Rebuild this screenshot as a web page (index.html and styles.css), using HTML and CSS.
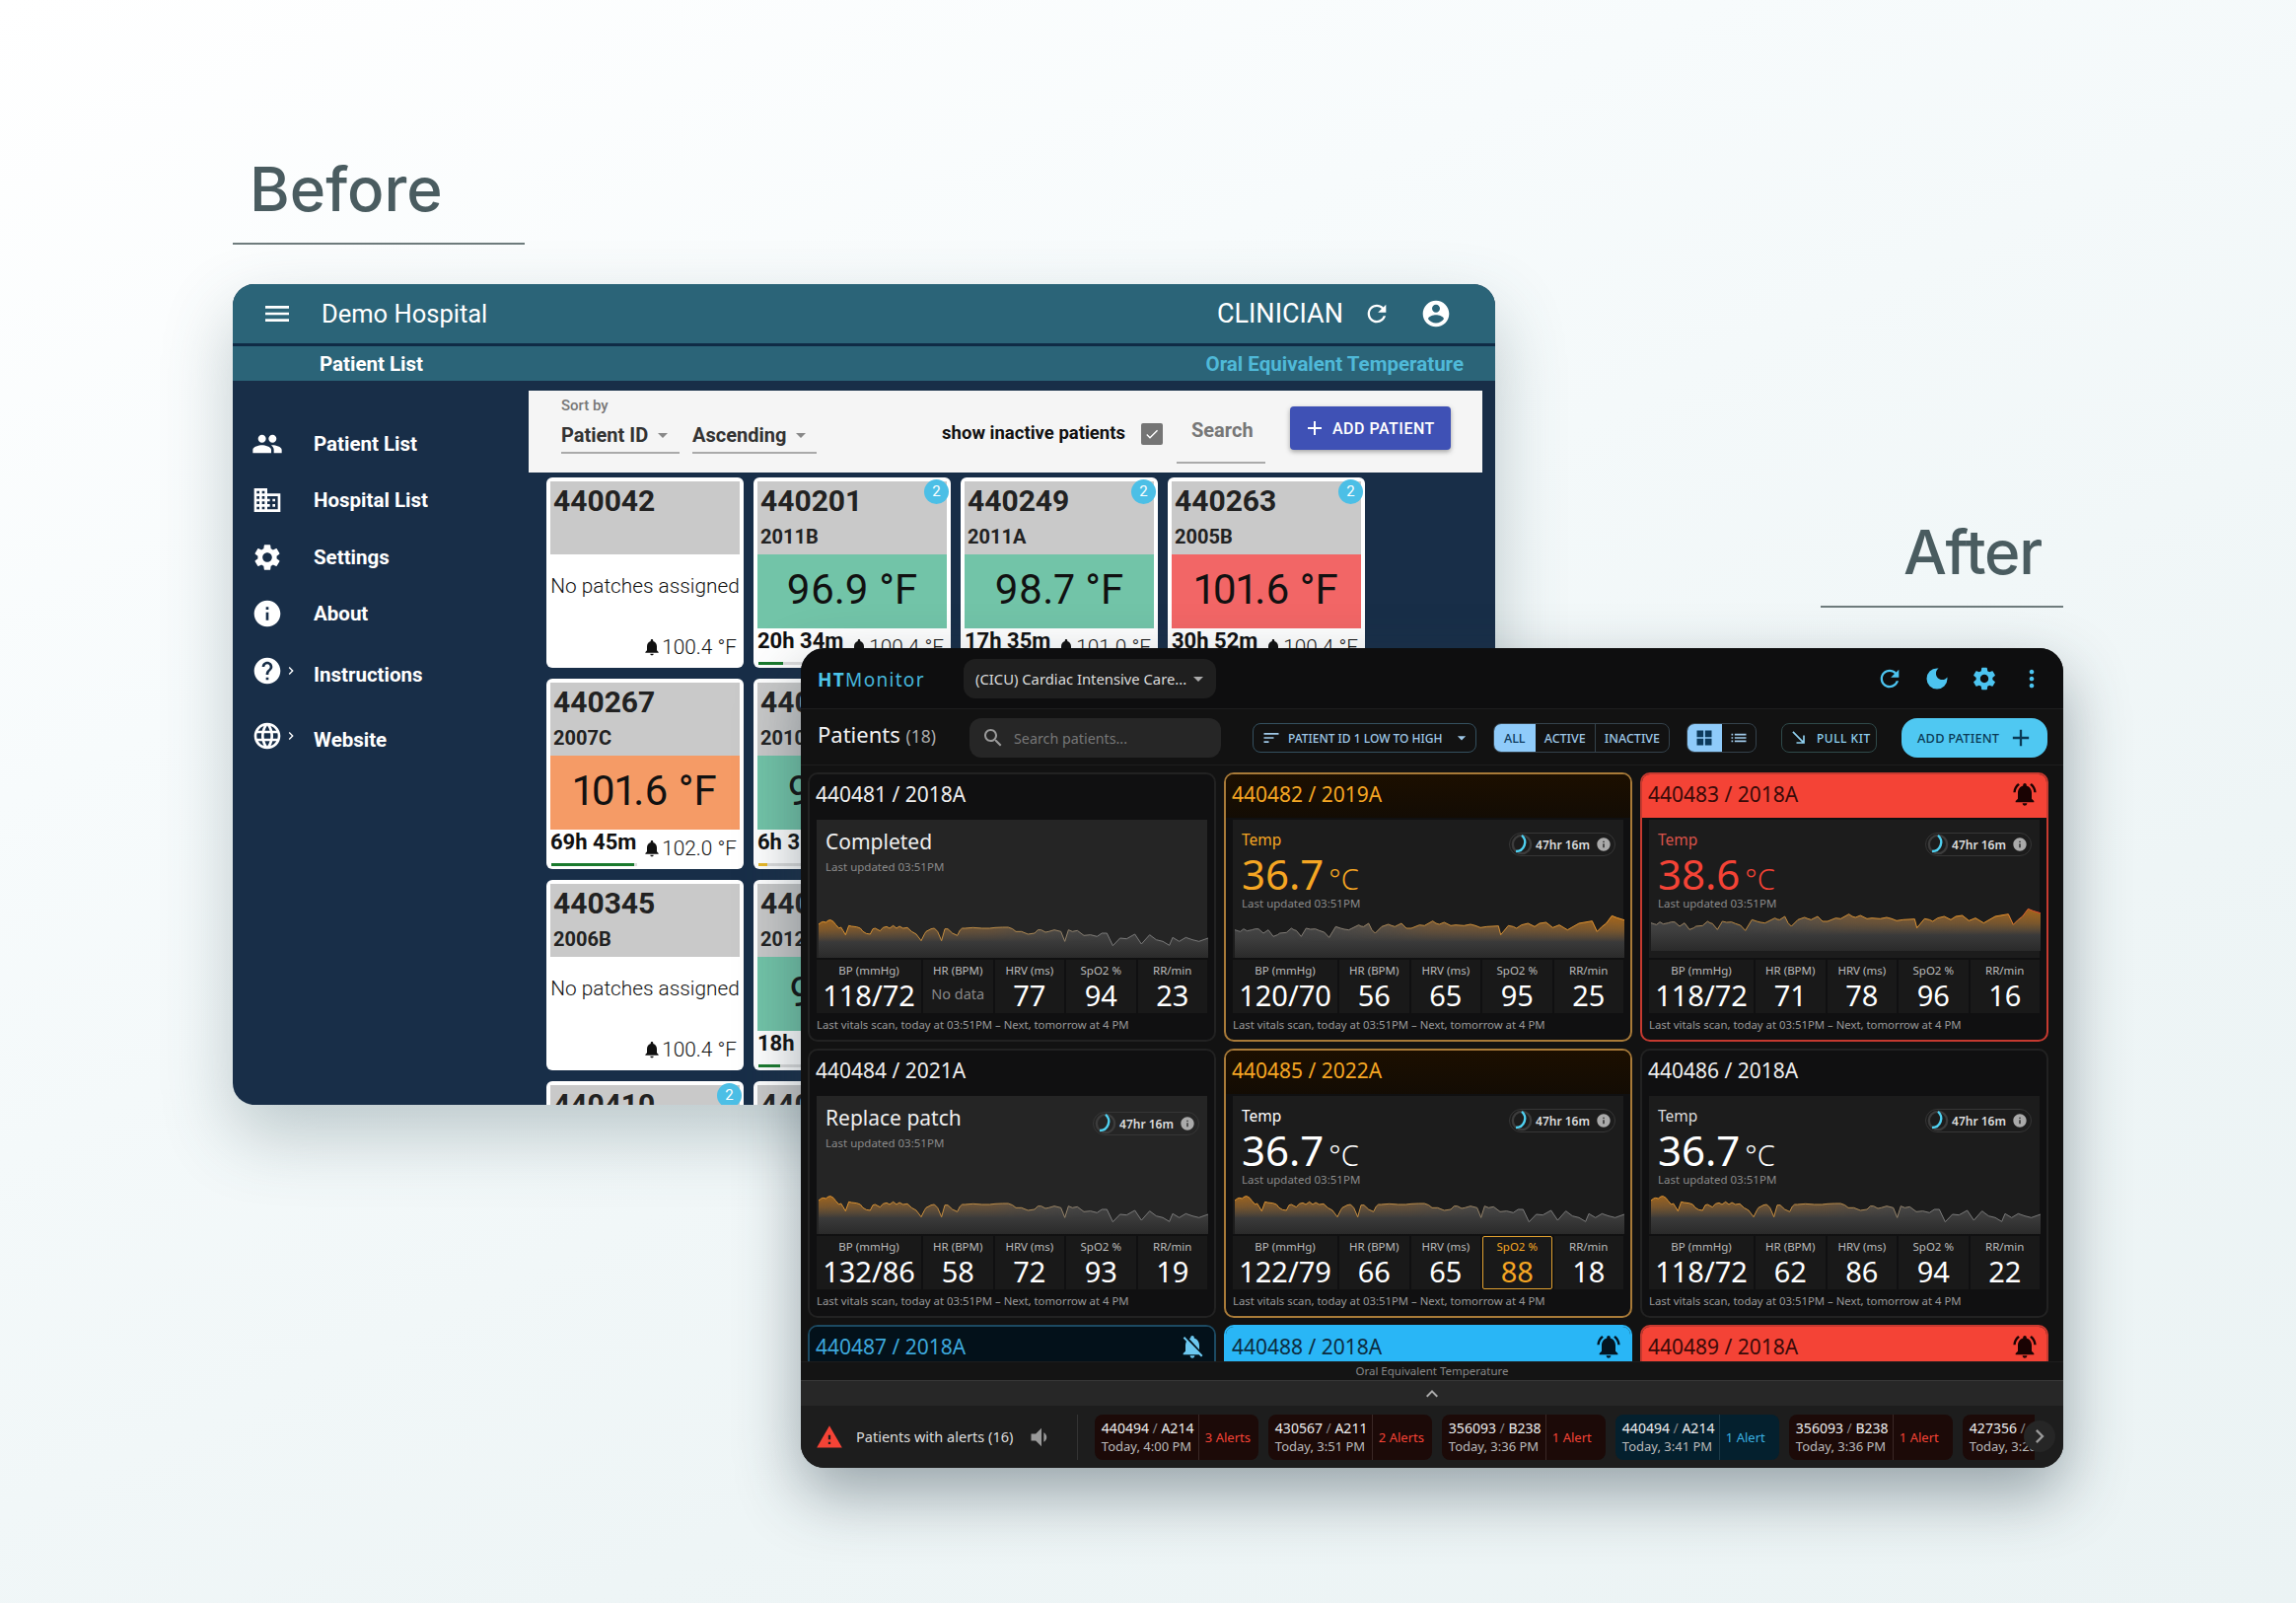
FILE: index.html
```html
<!DOCTYPE html>
<html lang="en">
<head>
    <meta charset="UTF-8">
    <title>Before and After - HTMonitor</title>
    <link rel="stylesheet" href="styles.css">
</head>
<body>

    <!-- icon sprite and chart waves -->
    <svg class="sprite" width="0" height="0">
        <defs>
            <symbol id="i-menu" viewBox="0 0 24 24"><path d="M3 18h18v-2H3v2zm0-5h18v-2H3v2zm0-7v2h18V6H3z"/></symbol>
            <symbol id="i-people" viewBox="0 0 24 24"><path d="M16 11c1.66 0 2.99-1.34 2.99-3S17.66 5 16 5c-1.66 0-3 1.34-3 3s1.34 3 3 3zm-8 0c1.66 0 2.99-1.34 2.99-3S9.66 5 8 5C6.34 5 5 6.34 5 8s1.34 3 3 3zm0 2c-2.33 0-7 1.17-7 3.5V19h14v-2.5c0-2.33-4.67-3.5-7-3.5zm8 0c-.29 0-.62.02-.97.05 1.16.84 1.97 1.97 1.97 3.45V19h6v-2.5c0-2.33-4.67-3.5-7-3.5z"/></symbol>
            <symbol id="i-business" viewBox="0 0 24 24"><path d="M12 7V3H2v18h20V7H12zM6 19H4v-2h2v2zm0-4H4v-2h2v2zm0-4H4V9h2v2zm0-4H4V5h2v2zm4 12H8v-2h2v2zm0-4H8v-2h2v2zm0-4H8V9h2v2zm0-4H8V5h2v2zm10 12h-8v-2h2v-2h-2v-2h2v-2h-2V9h8v10zm-2-8h-2v2h2v-2zm0 4h-2v2h2v-2z"/></symbol>
            <symbol id="i-gear" viewBox="0 0 24 24"><path d="M19.14 12.94c.04-.3.06-.61.06-.94 0-.32-.02-.64-.07-.94l2.03-1.58c.18-.14.23-.41.12-.61l-1.92-3.32c-.12-.22-.37-.29-.59-.22l-2.39.96c-.5-.38-1.03-.7-1.62-.94l-.36-2.54c-.04-.24-.24-.41-.48-.41h-3.84c-.24 0-.43.17-.47.41l-.36 2.54c-.59.24-1.13.57-1.62.94l-2.39-.96c-.22-.08-.47 0-.59.22L2.74 8.87c-.12.21-.08.47.12.61l2.03 1.58c-.05.3-.09.63-.09.94s.02.64.07.94l-2.03 1.58c-.18.14-.23.41-.12.61l1.92 3.32c.12.22.37.29.59.22l2.39-.96c.5.38 1.03.7 1.62.94l.36 2.54c.05.24.24.41.48.41h3.84c.24 0 .44-.17.47-.41l.36-2.54c.59-.24 1.13-.56 1.62-.94l2.39.96c.22.08.47 0 .59-.22l1.92-3.32c.12-.22.07-.47-.12-.61l-2.01-1.58zM12 15.6c-1.98 0-3.6-1.62-3.6-3.6s1.62-3.6 3.6-3.6 3.6 1.62 3.6 3.6-1.62 3.6-3.6 3.6z"/></symbol>
            <symbol id="i-info" viewBox="0 0 24 24"><path d="M12 2C6.48 2 2 6.48 2 12s4.48 10 10 10 10-4.48 10-10S17.52 2 12 2zm1 15h-2v-6h2v6zm0-8h-2V7h2v2z"/></symbol>
            <symbol id="i-help" viewBox="0 0 24 24"><path d="M12 2C6.48 2 2 6.48 2 12s4.48 10 10 10 10-4.48 10-10S17.52 2 12 2zm1 17h-2v-2h2v2zm2.07-7.75l-.9.92C13.45 12.9 13 13.5 13 15h-2v-.5c0-1.1.45-2.1 1.17-2.83l1.24-1.26c.37-.36.59-.86.59-1.41 0-1.1-.9-2-2-2s-2 .9-2 2H8c0-2.21 1.79-4 4-4s4 1.79 4 4c0 .88-.36 1.68-.93 2.25z"/></symbol>
            <symbol id="i-globe" viewBox="0 0 24 24"><path d="M11.99 2C6.47 2 2 6.48 2 12s4.47 10 9.99 10C17.52 22 22 17.52 22 12S17.52 2 11.99 2zm6.93 6h-2.95c-.32-1.25-.78-2.45-1.38-3.56 1.84.63 3.37 1.91 4.33 3.56zM12 4.04c.83 1.2 1.48 2.53 1.91 3.96h-3.82c.43-1.43 1.08-2.76 1.91-3.96zM4.26 14C4.1 13.36 4 12.69 4 12s.1-1.36.26-2h3.38c-.08.66-.14 1.32-.14 2 0 .68.06 1.34.14 2H4.26zm.82 2h2.95c.32 1.25.78 2.45 1.38 3.56-1.84-.63-3.37-1.9-4.33-3.56zm2.95-8H5.08c.96-1.66 2.49-2.93 4.33-3.56C8.81 5.55 8.35 6.75 8.03 8zM12 19.96c-.83-1.2-1.48-2.53-1.91-3.96h3.82c-.43 1.43-1.08 2.76-1.91 3.96zM14.34 14H9.66c-.09-.66-.16-1.32-.16-2 0-.68.07-1.35.16-2h4.68c.09.65.16 1.32.16 2 0 .68-.07 1.34-.16 2zm.25 5.56c.6-1.11 1.06-2.31 1.38-3.56h2.95c-.96 1.65-2.49 2.93-4.33 3.56zM16.36 14c.08-.66.14-1.32.14-2 0-.68-.06-1.34-.14-2h3.38c.16.64.26 1.31.26 2s-.1 1.36-.26 2h-3.38z"/></symbol>
            <symbol id="i-account" viewBox="0 0 24 24"><path d="M12 2C6.48 2 2 6.48 2 12s4.48 10 10 10 10-4.48 10-10S17.52 2 12 2zm0 3c1.66 0 3 1.34 3 3s-1.34 3-3 3-3-1.34-3-3 1.34-3 3-3zm0 14.2c-2.5 0-4.71-1.28-6-3.22.03-1.99 4-3.08 6-3.08 1.99 0 5.97 1.09 6 3.08-1.29 1.94-3.5 3.22-6 3.22z"/></symbol>
            <symbol id="i-refresh" viewBox="0 0 24 24"><path d="M17.65 6.35C16.2 4.9 14.21 4 12 4c-4.42 0-7.99 3.58-7.99 8s3.57 8 7.99 8c3.73 0 6.84-2.55 7.73-6h-2.08c-.82 2.33-3.04 4-5.65 4-3.31 0-6-2.69-6-6s2.69-6 6-6c1.66 0 3.14.69 4.22 1.78L13 11h7V4l-2.35 2.35z"/></symbol>
            <symbol id="i-bell" viewBox="0 0 24 24"><path d="M12 22c1.1 0 2-.9 2-2h-4c0 1.1.89 2 2 2zm6-6v-5c0-3.07-1.64-5.64-4.5-6.32V4c0-.83-.67-1.5-1.5-1.5s-1.5.67-1.5 1.5v.68C7.63 5.36 6 7.92 6 11v5l-2 2v1h16v-1l-2-2z"/></symbol>
            <symbol id="i-bell-ring" viewBox="0 0 24 24"><path d="M7.58 4.08L6.15 2.65C3.75 4.48 2.17 7.3 2.03 10.5h2c.15-2.65 1.51-4.97 3.55-6.42zm12.39 6.42h2c-.15-3.2-1.73-6.02-4.12-7.85l-1.42 1.43c2.02 1.45 3.39 3.77 3.54 6.42zM18 11c0-3.07-1.64-5.64-4.5-6.32V4c0-.83-.67-1.5-1.5-1.5s-1.5.67-1.5 1.5v.68C7.63 5.36 6 7.92 6 11v5l-2 2v1h16v-1l-2-2v-5zm-6 11c.14 0 .27-.01.4-.04.65-.14 1.18-.58 1.44-1.18.1-.24.15-.5.15-.78h-4c.01 1.1.9 2 2.01 2z"/></symbol>
            <symbol id="i-bell-off" viewBox="0 0 24 24"><path d="M20 18.69L7.84 6.14 5.27 3.49 4 4.76l2.8 2.8v.01c-.52.99-.8 2.16-.8 3.42v5l-2 2v1h13.73l2 2L21 19.72l-1-1.03zM12 22c1.11 0 2-.89 2-2h-4c0 1.11.89 2 2 2zm6-7.32V11c0-3.08-1.64-5.64-4.5-6.32V4c0-.83-.67-1.5-1.5-1.5s-1.5.67-1.5 1.5v.68c-.15.03-.29.08-.42.12-.1.03-.2.07-.3.11h-.01c-.2.08-.4.17-.59.27-.01 0-.01 0-.02.01L18 14.68z"/></symbol>
            <symbol id="i-moon" viewBox="0 0 24 24"><path d="M12 3a9 9 0 1 0 9 9c0-.46-.04-.92-.1-1.36-.98 1.37-2.58 2.26-4.4 2.26-3 0-5.4-2.4-5.4-5.4 0-1.81.89-3.42 2.26-4.4-.44-.06-.9-.1-1.36-.1z"/></symbol>
            <symbol id="i-dots" viewBox="0 0 24 24"><path d="M12 8c1.1 0 2-.9 2-2s-.9-2-2-2-2 .9-2 2 .9 2 2 2zm0 2c-1.1 0-2 .9-2 2s.9 2 2 2 2-.9 2-2-.9-2-2-2zm0 6c-1.1 0-2 .9-2 2s.9 2 2 2 2-.9 2-2-.9-2-2-2z"/></symbol>
            <symbol id="i-search" viewBox="0 0 24 24"><path d="M15.5 14h-.79l-.28-.27C15.41 12.59 16 11.11 16 9.5 16 5.91 13.09 3 9.5 3S3 5.91 3 9.5 5.91 16 9.5 16c1.61 0 3.09-.59 4.23-1.57l.27.28v.79l5 4.99L20.49 19l-4.99-5zm-6 0C7.01 14 5 11.99 5 9.5S7.01 5 9.5 5 14 7.01 14 9.5 11.99 14 9.5 14z"/></symbol>
            <symbol id="i-sort" viewBox="0 0 24 24"><path d="M3 18h6v-2H3v2zM3 6v2h18V6H3zm0 7h12v-2H3v2z"/></symbol>
            <symbol id="i-grid" viewBox="0 0 24 24"><path d="M3 3v8h8V3H3zm0 10v8h8v-8H3zm10-10v8h8V3h-8zm0 10v8h8v-8h-8z"/></symbol>
            <symbol id="i-list" viewBox="0 0 24 24"><path d="M3 13h2v-2H3v2zm0 4h2v-2H3v2zm0-8h2V7H3v2zm4 4h14v-2H7v2zm0 4h14v-2H7v2zM7 7v2h14V7H7z"/></symbol>
            <symbol id="i-southeast" viewBox="0 0 24 24"><path d="M19 9h-2v6.59L5.41 4 4 5.41 15.59 17H9v2h10V9z"/></symbol>
            <symbol id="i-warning" viewBox="0 0 24 24"><path d="M1 21h22L12 2 1 21zm12-3h-2v-2h2v2zm0-4h-2v-4h2v4z"/></symbol>
            <symbol id="i-volume" viewBox="0 0 24 24"><path d="M3 9v6h4l5 5V4L7 9H3zm13.5 3c0-1.77-1.02-3.29-2.5-4.03v8.05c1.48-.73 2.5-2.25 2.5-4.02z"/></symbol>
            <symbol id="i-up" viewBox="0 0 24 24"><path d="M12 8l-6 6 1.41 1.41L12 10.83l4.59 4.58L18 14z"/></symbol>
            <symbol id="i-next" viewBox="0 0 24 24"><path d="M10 6L8.59 7.41 13.17 12l-4.58 4.59L10 18l6-6z"/></symbol>
            <symbol id="i-drop" viewBox="0 0 24 24"><path d="M7 10l5 5 5-5z"/></symbol>
            <symbol id="i-plus" viewBox="0 0 24 24"><path d="M19 13h-6v6h-2v-6H5v-2h6V5h2v6h6v2z"/></symbol>
            <symbol id="i-check" viewBox="0 0 24 24"><path d="M9 16.17L4.83 12l-1.42 1.41L9 19 21 7l-1.41-1.41z"/></symbol>

            <linearGradient id="stroke-a" gradientUnits="userSpaceOnUse" x1="0" y1="0" x2="1185" y2="0">
                <stop offset="0" stop-color="#e0922c"/><stop offset=".5" stop-color="#b58a4c"/><stop offset=".72" stop-color="#7c7c7c"/><stop offset="1" stop-color="#777"/>
            </linearGradient>
            <linearGradient id="stroke-b" gradientUnits="userSpaceOnUse" x1="0" y1="0" x2="1185" y2="0">
                <stop offset="0" stop-color="#777"/><stop offset=".3" stop-color="#8a8072"/><stop offset=".45" stop-color="#c28a3c"/><stop offset="1" stop-color="#e8942c"/>
            </linearGradient>
            <linearGradient id="stroke-c" gradientUnits="userSpaceOnUse" x1="0" y1="0" x2="1185" y2="0">
                <stop offset="0" stop-color="#8a8072"/><stop offset=".25" stop-color="#c28a3c"/><stop offset=".9" stop-color="#e8942c"/><stop offset=".96" stop-color="#d8602c"/><stop offset="1" stop-color="#e0402c"/>
            </linearGradient>
            <linearGradient id="tint-a" gradientUnits="userSpaceOnUse" x1="0" y1="0" x2="1185" y2="0">
                <stop offset="0" stop-color="#a0641c"/><stop offset=".45" stop-color="#8a6030" stop-opacity=".75"/><stop offset=".72" stop-color="#666" stop-opacity="0"/>
            </linearGradient>
            <linearGradient id="tint-b" gradientUnits="userSpaceOnUse" x1="0" y1="0" x2="1185" y2="0">
                <stop offset=".15" stop-color="#666" stop-opacity="0"/><stop offset=".5" stop-color="#8a6030" stop-opacity=".75"/><stop offset="1" stop-color="#a0641c"/>
            </linearGradient>
            <linearGradient id="base-grey" gradientUnits="userSpaceOnUse" x1="0" y1="0" x2="0" y2="120">
                <stop offset="0" stop-color="#4c4c4c"/><stop offset=".5" stop-color="#3e3e3e"/><stop offset="1" stop-color="#2a2a2a"/>
            </linearGradient>
            <linearGradient id="fade-grad" gradientUnits="userSpaceOnUse" x1="0" y1="0" x2="0" y2="120">
                <stop offset="0" stop-color="#fff"/><stop offset=".3" stop-color="#999"/><stop offset=".6" stop-color="#000"/>
            </linearGradient>
            <mask id="fade" maskUnits="userSpaceOnUse" x="-10" y="-30" width="1205" height="160"><rect x="-10" y="-30" width="1205" height="160" fill="url(#fade-grad)"/></mask>

            <path id="wave-a-fill" d="M0 18L8 12L14 10L22 12L30 6L37 5L45 10L53 20L62 30L68 27L75 38L82 50L92 22L100 24L108 25L116 26L127 30L135 40L145 46L157 48L165 32L172 30L187 38L196 28L207 25L216 30L227 22L237 30L246 24L257 30L270 28L283 40L297 48L312 68L323 46L327 40L342 32L352 30L362 40L374 68L384 32L393 32L407 45L422 52L430 36L437 30L445 30L470 28L497 30L520 30L537 28L560 27L577 27L590 32L600 40L617 40L637 48L657 45L667 35L677 35L690 42L700 40L717 35L737 40L749 70L760 35L772 40L787 37L807 52L827 50L847 55L862 45L877 45L895 83L917 60L937 62L962 48L982 78L1007 50L1027 65L1047 70L1067 82L1077 58L1097 70L1117 58L1137 65L1157 70L1185 60V120H0Z"/>
            <path id="wave-a-line" d="M0 18L8 12L14 10L22 12L30 6L37 5L45 10L53 20L62 30L68 27L75 38L82 50L92 22L100 24L108 25L116 26L127 30L135 40L145 46L157 48L165 32L172 30L187 38L196 28L207 25L216 30L227 22L237 30L246 24L257 30L270 28L283 40L297 48L312 68L323 46L327 40L342 32L352 30L362 40L374 68L384 32L393 32L407 45L422 52L430 36L437 30L445 30L470 28L497 30L520 30L537 28L560 27L577 27L590 32L600 40L617 40L637 48L657 45L667 35L677 35L690 42L700 40L717 35L737 40L749 70L760 35L772 40L787 37L807 52L827 50L847 55L862 45L877 45L895 83L917 60L937 62L962 48L982 78L1007 50L1027 65L1047 70L1067 82L1077 58L1097 70L1117 58L1137 65L1157 70L1185 60"/>
            <path id="wave-b-fill" d="M0 35L10 38L17 40L27 32L37 38L52 35L62 32L72 32L87 45L102 35L117 55L130 50L137 45L157 43L172 30L180 35L187 37L202 55L217 30L230 33L245 32L257 37L272 42L287 58L307 25L322 30L333 33L347 35L377 20L384 24L392 25L407 15L417 35L427 45L447 25L467 18L477 22L487 25L507 15L522 30L537 30L552 24L562 20L577 22L602 8L612 15L622 18L637 12L657 22L672 20L697 22L717 18L732 22L747 28L767 25L802 23L809 50L832 22L847 25L857 30L872 20L892 15L912 25L927 15L947 12L967 28L987 20L1012 35L1047 15L1087 8L1102 40L1117 25L1130 15L1147 -8L1162 -2L1185 5V120H0Z"/>
            <path id="wave-b-line" d="M0 35L10 38L17 40L27 32L37 38L52 35L62 32L72 32L87 45L102 35L117 55L130 50L137 45L157 43L172 30L180 35L187 37L202 55L217 30L230 33L245 32L257 37L272 42L287 58L307 25L322 30L333 33L347 35L377 20L384 24L392 25L407 15L417 35L427 45L447 25L467 18L477 22L487 25L507 15L522 30L537 30L552 24L562 20L577 22L602 8L612 15L622 18L637 12L657 22L672 20L697 22L717 18L732 22L747 28L767 25L802 23L809 50L832 22L847 25L857 30L872 20L892 15L912 25L927 15L947 12L967 28L987 20L1012 35L1047 15L1087 8L1102 40L1117 25L1130 15L1147 -8L1162 -2L1185 5"/>

            <g id="chart-a">
                <use href="#wave-a-fill" fill="url(#base-grey)"/>
                <use href="#wave-a-fill" fill="url(#tint-a)" mask="url(#fade)"/>
                <use href="#wave-a-line" fill="none" stroke="url(#stroke-a)" stroke-width="3" stroke-linejoin="round"/>
            </g>
            <g id="chart-b">
                <use href="#wave-b-fill" fill="url(#base-grey)"/>
                <use href="#wave-b-fill" fill="url(#tint-b)" mask="url(#fade)"/>
                <use href="#wave-b-line" fill="none" stroke="url(#stroke-b)" stroke-width="3" stroke-linejoin="round"/>
            </g>
            <g id="chart-c">
                <use href="#wave-b-fill" fill="url(#base-grey)"/>
                <use href="#wave-b-fill" fill="url(#tint-b)" mask="url(#fade)"/>
                <use href="#wave-b-line" fill="none" stroke="url(#stroke-c)" stroke-width="3" stroke-linejoin="round"/>
            </g>
        </defs>
    </svg>

    <div class="page">

        <div class="caption caption-before">
            <h1>Before</h1>
        </div>
        <div class="caption caption-after">
            <h1>After</h1>
        </div>

        <!-- old app -->
        <section class="old-app">
            <header class="old-top">
                <svg class="ic ic-32"><use href="#i-menu"/></svg>
                <span class="old-hospital">Demo Hospital</span>
                <span class="old-role">CLINICIAN</span>
                <svg class="ic ic-28"><use href="#i-refresh"/></svg>
                <svg class="ic ic-32 old-account"><use href="#i-account"/></svg>
            </header>
            <div class="old-sub">
                <span>Patient List</span>
                <span class="old-oral">Oral Equivalent Temperature</span>
            </div>
            <div class="old-body">
                <nav class="old-nav">
                    <a class="old-link"><svg class="ic ic-32"><use href="#i-people"/></svg><i class="old-caret"></i>Patient List</a>
                    <a class="old-link"><svg class="ic ic-32"><use href="#i-business"/></svg><i class="old-caret"></i>Hospital List</a>
                    <a class="old-link"><svg class="ic ic-32"><use href="#i-gear"/></svg><i class="old-caret"></i>Settings</a>
                    <a class="old-link"><svg class="ic ic-32"><use href="#i-info"/></svg><i class="old-caret"></i>About</a>
                    <a class="old-link old-link-help"><svg class="ic ic-32"><use href="#i-help"/></svg><i class="old-caret"><svg class="ic ic-16"><use href="#i-next"/></svg></i>Instructions</a>
                    <a class="old-link old-link-web"><svg class="ic ic-32"><use href="#i-globe"/></svg><i class="old-caret"><svg class="ic ic-16"><use href="#i-next"/></svg></i>Website</a>
                </nav>
                <main class="old-main">
                    <div class="old-tools">
                        <div class="old-sort">
                            <div class="old-sort-label">Sort by</div>
                            <div class="old-selects">
                                <div class="old-select old-select-id">Patient ID<svg class="ic ic-24"><use href="#i-drop"/></svg></div>
                                <div class="old-select old-select-dir">Ascending<svg class="ic ic-24"><use href="#i-drop"/></svg></div>
                            </div>
                        </div>
                        <div class="old-inactive">show inactive patients</div>
                        <div class="old-check"><svg class="ic ic-16"><use href="#i-check"/></svg></div>
                        <div class="old-search">Search</div>
                        <button class="old-add"><svg class="ic ic-24"><use href="#i-plus"/></svg>ADD PATIENT</button>
                    </div>

                    <div class="tile-row">
                        <div class="tile">
                            <div class="tile-head"><b>440042</b></div>
                            <div class="tile-empty">No patches assigned</div>
                            <div class="tile-foot"><span></span><span class="tile-limit"><svg class="ic ic-18"><use href="#i-bell"/></svg>100.4 °F</span></div>
                        </div>
                        <div class="tile">
                            <span class="tile-badge">2</span>
                            <div class="tile-head"><b>440201</b><em>2011B</em></div>
                            <div class="tile-temp tile-green">96.9 °F</div>
                            <div class="tile-foot"><span class="tile-time">20h 34m</span><span class="tile-limit"><svg class="ic ic-18"><use href="#i-bell"/></svg>100.4 °F</span></div>
                            <div class="tile-bar"><i class="tile-fill" style="width: 29%"></i></div>
                        </div>
                        <div class="tile">
                            <span class="tile-badge">2</span>
                            <div class="tile-head"><b>440249</b><em>2011A</em></div>
                            <div class="tile-temp tile-green">98.7 °F</div>
                            <div class="tile-foot"><span class="tile-time">17h 35m</span><span class="tile-limit"><svg class="ic ic-18"><use href="#i-bell"/></svg>101.0 °F</span></div>
                            <div class="tile-bar"><i class="tile-fill" style="width: 25%"></i></div>
                        </div>
                        <div class="tile">
                            <span class="tile-badge">2</span>
                            <div class="tile-head"><b>440263</b><em>2005B</em></div>
                            <div class="tile-temp tile-red">101.6 °F</div>
                            <div class="tile-foot"><span class="tile-time">30h 52m</span><span class="tile-limit"><svg class="ic ic-18"><use href="#i-bell"/></svg>100.4 °F</span></div>
                            <div class="tile-bar"><i class="tile-fill" style="width: 43%"></i></div>
                        </div>
                    </div>

                    <div class="tile-row">
                        <div class="tile">
                            <div class="tile-head"><b>440267</b><em>2007C</em></div>
                            <div class="tile-temp tile-orange">101.6 °F</div>
                            <div class="tile-foot"><span class="tile-time">69h 45m</span><span class="tile-limit"><svg class="ic ic-18"><use href="#i-bell"/></svg>102.0 °F</span></div>
                            <div class="tile-bar"><i class="tile-fill" style="width: 97%"></i></div>
                        </div>
                        <div class="tile">
                            <div class="tile-head"><b>440270</b><em>2010C</em></div>
                            <div class="tile-temp tile-green">97.8 °F</div>
                            <div class="tile-foot"><span class="tile-time">6h 31m</span></div>
                            <div class="tile-bar tile-bar-plain"><i class="tile-fill tile-fill-low" style="width: 10%"></i></div>
                        </div>
                    </div>

                    <div class="tile-row">
                        <div class="tile">
                            <div class="tile-head"><b>440345</b><em>2006B</em></div>
                            <div class="tile-empty">No patches assigned</div>
                            <div class="tile-foot"><span></span><span class="tile-limit"><svg class="ic ic-18"><use href="#i-bell"/></svg>100.4 °F</span></div>
                        </div>
                        <div class="tile">
                            <div class="tile-head"><b>440401</b><em>2012A</em></div>
                            <div class="tile-temp tile-green">98.1 °F</div>
                            <div class="tile-foot"><span class="tile-time">18h 12m</span></div>
                            <div class="tile-bar tile-bar-plain"><i class="tile-fill" style="width: 25%"></i></div>
                        </div>
                    </div>

                    <div class="tile-row">
                        <div class="tile">
                            <span class="tile-badge">2</span>
                            <div class="tile-head"><b>440410</b></div>
                        </div>
                        <div class="tile">
                            <div class="tile-head"><b>440412</b></div>
                        </div>
                    </div>
                </main>
            </div>
        </section>

        <!-- new app -->
        <section class="app">
            <header class="app-top">
                <div class="logo"><b>HT</b>Monitor</div>
                <div class="ward">(CICU) Cardiac Intensive Care...<svg class="ic ic-24"><use href="#i-drop"/></svg></div>
                <div class="app-actions">
                    <svg class="ic ic-28"><use href="#i-refresh"/></svg>
                    <svg class="ic ic-28"><use href="#i-moon"/></svg>
                    <svg class="ic ic-28"><use href="#i-gear"/></svg>
                    <svg class="ic ic-28"><use href="#i-dots"/></svg>
                </div>
            </header>

            <div class="app-tools">
                <div class="app-title">Patients <span>(18)</span></div>
                <div class="search"><svg class="ic ic-24"><use href="#i-search"/></svg>Search patients...</div>
                <div class="btn btn-sort"><svg class="ic ic-20"><use href="#i-sort"/></svg>PATIENT ID 1 LOW TO HIGH<svg class="ic ic-20 btn-drop"><use href="#i-drop"/></svg></div>
                <div class="seg">
                    <span class="seg-on seg-all">ALL</span>
                    <span class="seg-active">ACTIVE</span>
                    <span class="seg-inactive">INACTIVE</span>
                </div>
                <div class="seg seg-view">
                    <span class="seg-on"><svg class="ic ic-20"><use href="#i-grid"/></svg></span>
                    <span><svg class="ic ic-20"><use href="#i-list"/></svg></span>
                </div>
                <div class="btn btn-kit"><svg class="ic ic-20"><use href="#i-southeast"/></svg>PULL KIT</div>
                <div class="btn-add">ADD PATIENT<svg class="ic ic-28"><use href="#i-plus"/></svg></div>
            </div>

            <div class="cards">

                <article class="card">
                    <div class="card-head">440481 / 2018A</div>
                    <div class="panel panel-status">
                        <div class="panel-top">
                            <div>
                                <div class="status">Completed</div>
                                <div class="updated status-updated">Last updated 03:51PM</div>
                            </div>
                        </div>
                        <svg class="chart" viewBox="0 0 1185 120" preserveAspectRatio="none"><use href="#chart-a"/></svg>
                    </div>
                    <div class="vitals">
                        <div class="vital"><label>BP (mmHg)</label><strong>118/72</strong></div>
                        <div class="vital"><label>HR (BPM)</label><span class="no-data">No data</span></div>
                        <div class="vital"><label>HRV (ms)</label><strong>77</strong></div>
                        <div class="vital"><label>SpO2 %</label><strong>94</strong></div>
                        <div class="vital"><label>RR/min</label><strong>23</strong></div>
                    </div>
                    <div class="scan">Last vitals scan, today at 03:51PM – Next, tomorrow at 4 PM</div>
                </article>

                <article class="card card-warn">
                    <div class="card-head">440482 / 2019A</div>
                    <div class="panel">
                        <div class="panel-top">
                            <div>
                                <div class="temp-label">Temp</div>
                                <div class="temp-value">36.7<small>°C</small></div>
                                <div class="updated">Last updated 03:51PM</div>
                            </div>
                            <div class="timer"><svg class="ring" viewBox="0 0 24 24"><circle cx="12" cy="12" r="10" class="ring-bg"/><path d="M12 2A10 10 0 0 1 5.5 19.6" class="ring-on"/></svg>47hr 16m<svg class="ic ic-18"><use href="#i-info"/></svg></div>
                        </div>
                        <svg class="chart" viewBox="0 0 1185 120" preserveAspectRatio="none"><use href="#chart-b"/></svg>
                    </div>
                    <div class="vitals">
                        <div class="vital"><label>BP (mmHg)</label><strong>120/70</strong></div>
                        <div class="vital"><label>HR (BPM)</label><strong>56</strong></div>
                        <div class="vital"><label>HRV (ms)</label><strong>65</strong></div>
                        <div class="vital"><label>SpO2 %</label><strong>95</strong></div>
                        <div class="vital"><label>RR/min</label><strong>25</strong></div>
                    </div>
                    <div class="scan">Last vitals scan, today at 03:51PM – Next, tomorrow at 4 PM</div>
                </article>

                <article class="card card-alarm">
                    <div class="card-head">440483 / 2018A<svg class="ic ic-28"><use href="#i-bell-ring"/></svg></div>
                    <div class="panel">
                        <div class="panel-top">
                            <div>
                                <div class="temp-label">Temp</div>
                                <div class="temp-value">38.6<small>°C</small></div>
                                <div class="updated">Last updated 03:51PM</div>
                            </div>
                            <div class="timer"><svg class="ring" viewBox="0 0 24 24"><circle cx="12" cy="12" r="10" class="ring-bg"/><path d="M12 2A10 10 0 0 1 5.5 19.6" class="ring-on"/></svg>47hr 16m<svg class="ic ic-18"><use href="#i-info"/></svg></div>
                        </div>
                        <svg class="chart chart-high" viewBox="0 0 1185 120" preserveAspectRatio="none"><use href="#chart-c"/></svg>
                    </div>
                    <div class="vitals">
                        <div class="vital"><label>BP (mmHg)</label><strong>118/72</strong></div>
                        <div class="vital"><label>HR (BPM)</label><strong>71</strong></div>
                        <div class="vital"><label>HRV (ms)</label><strong>78</strong></div>
                        <div class="vital"><label>SpO2 %</label><strong>96</strong></div>
                        <div class="vital"><label>RR/min</label><strong>16</strong></div>
                    </div>
                    <div class="scan">Last vitals scan, today at 03:51PM – Next, tomorrow at 4 PM</div>
                </article>

                <article class="card">
                    <div class="card-head">440484 / 2021A</div>
                    <div class="panel panel-status">
                        <div class="panel-top">
                            <div>
                                <div class="status">Replace patch</div>
                                <div class="updated status-updated">Last updated 03:51PM</div>
                            </div>
                            <div class="timer timer-low"><svg class="ring" viewBox="0 0 24 24"><circle cx="12" cy="12" r="10" class="ring-bg"/><path d="M12 2A10 10 0 0 1 5.5 19.6" class="ring-on"/></svg>47hr 16m<svg class="ic ic-18"><use href="#i-info"/></svg></div>
                        </div>
                        <svg class="chart" viewBox="0 0 1185 120" preserveAspectRatio="none"><use href="#chart-a"/></svg>
                    </div>
                    <div class="vitals">
                        <div class="vital"><label>BP (mmHg)</label><strong>132/86</strong></div>
                        <div class="vital"><label>HR (BPM)</label><strong>58</strong></div>
                        <div class="vital"><label>HRV (ms)</label><strong>72</strong></div>
                        <div class="vital"><label>SpO2 %</label><strong>93</strong></div>
                        <div class="vital"><label>RR/min</label><strong>19</strong></div>
                    </div>
                    <div class="scan">Last vitals scan, today at 03:51PM – Next, tomorrow at 4 PM</div>
                </article>

                <article class="card card-warn card-warn-vital">
                    <div class="card-head">440485 / 2022A</div>
                    <div class="panel">
                        <div class="panel-top">
                            <div>
                                <div class="temp-label">Temp</div>
                                <div class="temp-value">36.7<small>°C</small></div>
                                <div class="updated">Last updated 03:51PM</div>
                            </div>
                            <div class="timer"><svg class="ring" viewBox="0 0 24 24"><circle cx="12" cy="12" r="10" class="ring-bg"/><path d="M12 2A10 10 0 0 1 5.5 19.6" class="ring-on"/></svg>47hr 16m<svg class="ic ic-18"><use href="#i-info"/></svg></div>
                        </div>
                        <svg class="chart" viewBox="0 0 1185 120" preserveAspectRatio="none"><use href="#chart-a"/></svg>
                    </div>
                    <div class="vitals">
                        <div class="vital"><label>BP (mmHg)</label><strong>122/79</strong></div>
                        <div class="vital"><label>HR (BPM)</label><strong>66</strong></div>
                        <div class="vital"><label>HRV (ms)</label><strong>65</strong></div>
                        <div class="vital vital-warn"><label>SpO2 %</label><strong>88</strong></div>
                        <div class="vital"><label>RR/min</label><strong>18</strong></div>
                    </div>
                    <div class="scan">Last vitals scan, today at 03:51PM – Next, tomorrow at 4 PM</div>
                </article>

                <article class="card">
                    <div class="card-head">440486 / 2018A</div>
                    <div class="panel">
                        <div class="panel-top">
                            <div>
                                <div class="temp-label">Temp</div>
                                <div class="temp-value">36.7<small>°C</small></div>
                                <div class="updated">Last updated 03:51PM</div>
                            </div>
                            <div class="timer"><svg class="ring" viewBox="0 0 24 24"><circle cx="12" cy="12" r="10" class="ring-bg"/><path d="M12 2A10 10 0 0 1 5.5 19.6" class="ring-on"/></svg>47hr 16m<svg class="ic ic-18"><use href="#i-info"/></svg></div>
                        </div>
                        <svg class="chart" viewBox="0 0 1185 120" preserveAspectRatio="none"><use href="#chart-a"/></svg>
                    </div>
                    <div class="vitals">
                        <div class="vital"><label>BP (mmHg)</label><strong>118/72</strong></div>
                        <div class="vital"><label>HR (BPM)</label><strong>62</strong></div>
                        <div class="vital"><label>HRV (ms)</label><strong>86</strong></div>
                        <div class="vital"><label>SpO2 %</label><strong>94</strong></div>
                        <div class="vital"><label>RR/min</label><strong>22</strong></div>
                    </div>
                    <div class="scan">Last vitals scan, today at 03:51PM – Next, tomorrow at 4 PM</div>
                </article>

                <article class="card card-muted">
                    <div class="card-head">440487 / 2018A<svg class="ic ic-28"><use href="#i-bell-off"/></svg></div>
                </article>
                <article class="card card-info">
                    <div class="card-head">440488 / 2018A<svg class="ic ic-28"><use href="#i-bell-ring"/></svg></div>
                </article>
                <article class="card card-alarm">
                    <div class="card-head">440489 / 2018A<svg class="ic ic-28"><use href="#i-bell-ring"/></svg></div>
                </article>
            </div>

            <div class="app-note">Oral Equivalent Temperature</div>
            <div class="drawer-handle"><svg class="ic ic-24"><use href="#i-up"/></svg></div>

            <footer class="alerts">
                <svg class="ic ic-28 alerts-icon"><use href="#i-warning"/></svg>
                <span class="alerts-label">Patients with alerts (16)</span>
                <svg class="ic ic-28 alerts-sound"><use href="#i-volume"/></svg>
                <div class="chips">
                    <div class="chip"><div class="chip-id"><b>440494 <i>/</i> A214</b><span>Today, 4:00 PM</span></div><div class="chip-count">3 Alerts</div></div>
                    <div class="chip"><div class="chip-id"><b>430567 <i>/</i> A211</b><span>Today, 3:51 PM</span></div><div class="chip-count">2 Alerts</div></div>
                    <div class="chip"><div class="chip-id"><b>356093 <i>/</i> B238</b><span>Today, 3:36 PM</span></div><div class="chip-count">1 Alert</div></div>
                    <div class="chip chip-blue"><div class="chip-id"><b>440494 <i>/</i> A214</b><span>Today, 3:41 PM</span></div><div class="chip-count">1 Alert</div></div>
                    <div class="chip"><div class="chip-id"><b>356093 <i>/</i> B238</b><span>Today, 3:36 PM</span></div><div class="chip-count">1 Alert</div></div>
                    <div class="chip"><div class="chip-id"><b>427356 <i>/</i> A209</b><span>Today, 3:28 PM</span></div><div class="chip-count">1 Alert</div></div>
                </div>
                <div class="chips-next"><svg class="ic ic-28"><use href="#i-next"/></svg></div>
            </footer>
        </section>

    </div>

</body>
</html>
```

FILE: styles.css
```css
* {
    box-sizing: border-box;
}

body {
    margin: 0;
    background: #f3f8f9;
}

.sprite {
    position: absolute;
}

.ic {
    display: block;
    flex: none;
    fill: currentColor;
}

.ic-16 { width: 16px; height: 16px; }
.ic-18 { width: 18px; height: 18px; }
.ic-20 { width: 20px; height: 20px; }
.ic-24 { width: 24px; height: 24px; }
.ic-28 { width: 28px; height: 28px; }
.ic-32 { width: 32px; height: 32px; }

.page {
    position: relative;
    width: 2328px;
    height: 1625px;
    overflow: hidden;
    background: linear-gradient(155deg, #ffffff 0%, #f7fbfc 30%, #eef5f6 70%, #ebf3f4 100%);
}

/* Before / After headings */
.caption {
    position: absolute;
    border-bottom: 2px solid #6f7c7d;
}

.caption h1 {
    margin: 0;
    font-family: Inter, "Noto Sans", sans-serif;
    font-size: 62px;
    font-weight: 500;
    line-height: 62px;
    letter-spacing: -1.2px;
    color: #4a5c60;
}

.caption-before {
    left: 236px;
    top: 161px;
    width: 296px;
    height: 87px;
    padding-left: 17px;
}

.caption-before h1 {
    letter-spacing: 0;
}

.caption-after {
    left: 1846px;
    top: 529px;
    width: 246px;
    height: 87px;
    padding-left: 84px;
}

/* old app window */
.old-app {
    position: absolute;
    left: 236px;
    top: 288px;
    width: 1280px;
    height: 832px;
    overflow: hidden;
    border-radius: 22px;
    background: #182e48;
    color: #fff;
    font-family: Roboto, sans-serif;
    box-shadow: 0 30px 70px rgba(60, 90, 95, 0.3);
}

.old-top {
    display: flex;
    align-items: center;
    height: 63px;
    padding: 0 44px 0 29px;
    background: #2b6478;
    border-bottom: 3px solid #0f2b45;
}

.old-hospital {
    margin-left: 29px;
    font-size: 25.5px;
}

.old-role {
    margin-left: auto;
    margin-right: 20px;
    font-size: 27px;
}

.old-account {
    margin-left: 30px;
}

.old-sub {
    display: flex;
    justify-content: space-between;
    align-items: center;
    height: 35px;
    padding: 0 32px 0 88px;
    background: #2b6478;
    font-size: 20.5px;
    font-weight: 700;
}

.old-oral {
    color: #4fb9d8;
}

.old-body {
    display: flex;
}

.old-nav {
    display: flex;
    flex-direction: column;
    flex: none;
    width: 300px;
    padding: 35px 0 0 19px;
}

.old-link {
    display: flex;
    align-items: center;
    height: 57.5px;
    font-size: 20.5px;
    font-weight: 700;
}

.old-caret {
    display: flex;
    width: 31px;
}

.old-link-help {
    margin-top: 4.5px;
}

.old-link-web {
    margin-top: 8.5px;
}

.old-link-help .ic-32,
.old-link-web .ic-32,
.old-caret .ic {
    margin-top: -8px;
}

.old-main {
    flex: 1;
    padding: 10px 13px 0 0;
}

.old-tools {
    display: flex;
    height: 83px;
    margin-bottom: 5px;
    padding-right: 32px;
    background: #f5f5f5;
    color: #333;
}

.old-sort {
    padding-left: 33px;
}

.old-sort-label {
    margin-top: 6px;
    font-size: 15px;
    font-weight: 500;
    line-height: 18px;
    color: #777;
}

.old-selects {
    display: flex;
    gap: 13px;
    margin-top: 7px;
}

.old-select {
    display: flex;
    align-items: center;
    height: 33px;
    border-bottom: 2px solid #aaa;
    font-size: 20px;
    font-weight: 700;
    padding-bottom: 3px;
}

.old-select .ic {
    margin-left: 3px;
    color: #888;
}

.old-select-id {
    width: 120px;
}

.old-select-dir {
    width: 126px;
}

.old-inactive {
    margin: 33px 0 0 auto;
    font-size: 18.5px;
    font-weight: 700;
    line-height: 20px;
    color: #111;
    white-space: nowrap;
}

.old-check {
    display: flex;
    align-items: center;
    justify-content: center;
    width: 22px;
    height: 22px;
    margin: 33px 0 0 16px;
    border-radius: 2px;
    background: #757575;
    color: #fff;
}

.old-search {
    width: 90px;
    height: 74px;
    margin-left: 14px;
    padding: 28px 0 0 15px;
    border-bottom: 2px solid #aaa;
    font-size: 20px;
    font-weight: 700;
    line-height: 24px;
    color: #777;
}

.old-add {
    display: flex;
    align-items: center;
    gap: 6px;
    height: 44px;
    margin: 16px 0 0 25px;
    padding: 0 12px 0 13px;
    width: 163px;
    border: none;
    border-radius: 4px;
    background: #3f51b5;
    color: #fff;
    font-family: Roboto, sans-serif;
    font-size: 16px;
    font-weight: 500;
    letter-spacing: 0.5px;
    box-shadow: 0 2px 5px rgba(0, 0, 0, 0.35);
}

.tile-row {
    display: flex;
    gap: 10px;
    margin-left: 18px;
    margin-bottom: 11px;
}

.tile {
    position: relative;
    flex: none;
    width: 200px;
    height: 193px;
    padding: 4px;
    border-radius: 6px;
    background: #fff;
    color: #111;
}

.tile-head {
    display: flex;
    flex-direction: column;
    height: 74px;
    padding: 3px 0 0 3px;
    background: #c9c9c9;
    color: #222;
}

.tile-head b {
    font-size: 30px;
    line-height: 34px;
}

.tile-head em {
    margin-top: 7px;
    font-size: 20px;
    font-style: normal;
    font-weight: 700;
    line-height: 24px;
}

.tile-temp {
    height: 75px;
    font-size: 42px;
    font-variant-numeric: proportional-nums;
    line-height: 71px;
    text-align: center;
    color: #111;
}

.tile-green { background: #72c4a8; }
.tile-red { background: #f26666; }
.tile-orange { background: #f59b66; }

.tile-empty {
    height: 75px;
    font-size: 20.8px;
    font-weight: 300;
    line-height: 64px;
    white-space: nowrap;
    text-align: center;
}

.tile-foot {
    display: flex;
    justify-content: space-between;
    padding: 1px 3px 0 0;
}

.tile-time {
    font-size: 22px;
    font-weight: 700;
    line-height: 24px;
    white-space: nowrap;
}

.tile-limit {
    display: flex;
    align-items: center;
    margin-top: 6px;
    font-size: 20.8px;
    font-weight: 300;
    line-height: 24px;
    white-space: nowrap;
}

.tile-limit .ic {
    width: 20px;
    height: 20px;
}

.tile-bar {
    width: 87px;
    height: 3px;
    margin: 3px 0 0 1px;
    background: #ddd;
}

.tile-bar-plain {
    margin-top: 9px;
}

.tile-fill {
    display: block;
    height: 100%;
    background: #1b7a2e;
}

.tile-fill-low {
    background: #e8b828;
}

.tile-badge {
    position: absolute;
    top: 2px;
    right: 2px;
    width: 25px;
    height: 25px;
    border-radius: 50%;
    background: #4cbfe6;
    color: #fff;
    font-size: 15px;
    line-height: 25px;
    text-align: center;
}

/* new app window */
.app {
    position: absolute;
    left: 812px;
    top: 657px;
    display: flex;
    flex-direction: column;
    width: 1280px;
    height: 831px;
    overflow: hidden;
    border-radius: 24px;
    background: #121212;
    color: #eee;
    font-family: "Noto Sans", sans-serif;
    box-shadow: 0 26px 64px rgba(40, 60, 70, 0.44);
}

.app-top {
    display: flex;
    align-items: center;
    flex: none;
    height: 62px;
    padding: 0 18px 0 17px;
    background: #0e0e0f;
    border-bottom: 1px solid #1f1f1f;
}

.logo {
    width: 148px;
    margin-top: 2px;
    font-size: 19px;
    letter-spacing: 1.3px;
    color: #46b7dc;
}

.logo b {
    color: #4cc4e8;
}

.ward {
    display: flex;
    align-items: center;
    width: 256px;
    height: 40px;
    padding-left: 12px;
    border-radius: 12px;
    background: #1f1f1f;
    font-size: 14.8px;
    color: #ddd;
    white-space: nowrap;
}

.ward .ic {
    color: #aaa;
}

.app-actions {
    display: flex;
    gap: 20px;
    margin-left: auto;
    color: #4cc4f0;
}

.app-tools {
    display: flex;
    align-items: center;
    flex: none;
    height: 57px;
    padding: 2px 16px 0 17px;
    background: #121212;
    border-bottom: 1px solid #1f1f1f;
}

.app-title {
    flex: none;
    width: 154px;
    margin-top: -8px;
    font-size: 22px;
    color: #f2f2f2;
}

.app-title span {
    font-size: 17.5px;
    color: #aaa;
}

.search {
    display: flex;
    align-items: center;
    gap: 9px;
    width: 255px;
    height: 40px;
    padding-left: 12px;
    border-radius: 12px;
    background: #262626;
    color: #777;
    font-size: 14.3px;
}

.search .ic {
    color: #999;
}

.btn {
    display: flex;
    align-items: center;
    height: 30px;
    border: 1px solid #34505f;
    border-radius: 8px;
    color: #9fc8e8;
    font-size: 12px;
    font-weight: 500;
    white-space: nowrap;
}

.btn-sort {
    gap: 7px;
    width: 227px;
    margin-left: 32px;
    padding-left: 8px;
}

.btn-drop {
    margin-left: 2px;
}

.seg {
    display: flex;
    flex: none;
    width: 179px;
    height: 30px;
    margin-left: 17px;
    overflow: hidden;
    border: 1px solid #34424c;
    border-radius: 8px;
    color: #9fc8e8;
    font-size: 12.5px;
    font-weight: 500;
}

.seg span {
    display: flex;
    align-items: center;
    justify-content: center;
}

.seg-all { width: 42px; }
.seg-active { width: 61px; }
.seg-inactive { width: 76px; border-left: 1px solid #34424c; }

.seg .seg-on {
    background: #8fcbfa;
    color: #0d3a5c;
}

.seg-view {
    width: 71px;
}

.seg-view span {
    flex: 1;
}

.btn-kit {
    flex: none;
    gap: 8px;
    width: 97px;
    margin-left: 25px;
    padding-left: 7px;
    border-color: #2f4a4a;
    color: #8fd0f0;
    letter-spacing: 0.5px;
}

.btn-add {
    display: flex;
    align-items: center;
    flex: none;
    gap: 8px;
    width: 148px;
    height: 40px;
    margin-left: 25px;
    padding-left: 16px;
    border-radius: 16px;
    background: #4fc8f2;
    color: #0a3a55;
    font-size: 12.8px;
    font-weight: 500;
    letter-spacing: 0.2px;
    white-space: nowrap;
}

.cards {
    display: grid;
    flex: none;
    grid-template-columns: repeat(3, 414px);
    grid-auto-rows: 273px;
    gap: 7px 8px;
    height: 604px;
    padding: 7px 0 0 7px;
    overflow: hidden;
}

.card {
    display: flex;
    flex-direction: column;
    border: 2px solid #222;
    border-radius: 10px;
    background: #101011;
    overflow: hidden;
}

.card-head {
    display: flex;
    align-items: center;
    justify-content: space-between;
    flex: none;
    height: 44px;
    padding: 0 8px 4px 6px;
    font-size: 21px;
    color: #eee;
}

.panel {
    display: flex;
    flex-direction: column;
    flex: none;
    height: 140px;
    margin: 2px 7px 0;
    background: #1c1c1c;
}

.panel-status {
    background: #252525;
}

.panel-top {
    display: flex;
    justify-content: space-between;
    padding: 8px 8px 0 9px;
}

.temp-label {
    font-size: 15.5px;
    line-height: 24px;
    color: #ddd;
}

.temp-value {
    margin-top: 3px;
    font-size: 42px;
    line-height: 40px;
    color: #fff;
}

.temp-value small {
    margin-left: 5px;
    font-size: 29px;
    font-weight: 300;
}

.updated {
    margin-top: -3px;
    font-size: 11.5px;
    line-height: 16px;
    color: #8a8a8a;
}

.status {
    margin-top: -1px;
    font-size: 21px;
    line-height: 30px;
    color: #eee;
}

.status-updated {
    margin-top: 3px;
}

.timer {
    display: flex;
    align-items: center;
    gap: 3px;
    height: 24px;
    margin-top: 5px;
    padding: 0 3px 0 1px;
    border: 1px solid #363636;
    border-radius: 12px;
    font-size: 12px;
    font-weight: 600;
    color: #ddd;
    white-space: nowrap;
}

.timer-low {
    margin-top: 8px;
}

.timer .ic {
    width: 16px;
    height: 16px;
    margin-left: 3px;
    color: #aaa;
}

.ring {
    width: 22px;
    height: 22px;
    fill: none;
    stroke-width: 2.6;
}

.ring-bg {
    stroke: #3c3c3c;
}

.ring-on {
    stroke: #4fd0f0;
}

.chart {
    display: block;
    width: 395px;
    height: 40px;
    margin: auto 1px 0 2px;
    overflow: visible;
}

.chart-high {
    transform: translateY(-7px);
}

.vitals {
    display: grid;
    flex: none;
    grid-template-columns: 106px repeat(4, 1fr);
    gap: 2px;
    height: 54px;
    margin: 2px 7px 0;
}

.vital {
    display: flex;
    flex-direction: column;
    align-items: center;
    background: #191919;
}

.vital label {
    margin-top: 3px;
    font-size: 11.5px;
    line-height: 16px;
    color: #bbb;
    white-space: nowrap;
}

.vital strong {
    margin-top: 0;
    font-size: 29px;
    font-weight: 400;
    line-height: 33px;
    color: #fff;
}

.no-data {
    margin-top: 5px;
    font-size: 14.5px;
    line-height: 20px;
    color: #888;
}

.vital-warn {
    border: 1px solid #e0a030;
    border-radius: 2px;
}

.vital-warn label,
.vital-warn strong {
    color: #f5a623;
}

.vital-warn label {
    margin-top: 2px;
}

.scan {
    margin: 4px 0 0 7px;
    font-size: 11.35px;
    line-height: 16px;
    color: #999;
    white-space: nowrap;
}

.card-warn {
    border-color: #a87a38;
}

.card-warn .card-head {
    background: linear-gradient(#1c0f00, #130c04);
    color: #f5a623;
}

.card-warn .temp-label,
.card-warn .temp-value {
    color: #f5a623;
}

.card-warn-vital .temp-label,
.card-warn-vital .temp-value {
    color: #fff;
}

.card-alarm {
    border-color: #c63a30;
}

.card-alarm .card-head {
    background: #f44336;
    color: #3a0a08;
}

.card-alarm .ic-28 {
    color: #1a0303;
}

.card-alarm .temp-label,
.card-alarm .temp-value {
    color: #f44336;
}

.card-alarm .temp-label {
    color: #d9534a;
}

.card-muted {
    border-color: #1c4a62;
}

.card-muted .card-head {
    background: #03111a;
    color: #3da8dc;
}

.card-muted .ic-28 {
    color: #6cc8f0;
}

.card-info {
    border-color: #29b6f6;
}

.card-info .card-head {
    background: #29b6f6;
    color: #0c2c40;
}

.card-info .ic-28 {
    color: #031420;
}

.app-note {
    flex: none;
    height: 19px;
    background: #141414;
    border-top: 1px solid #1d1d1d;
    font-size: 11.5px;
    line-height: 18px;
    text-align: center;
    color: #888;
}

.drawer-handle {
    display: flex;
    justify-content: center;
    align-items: center;
    flex: none;
    height: 26px;
    background: #272727;
    border-top: 1px solid #383838;
    color: #aaa;
}

.alerts {
    position: relative;
    display: flex;
    align-items: center;
    flex: none;
    height: 63px;
    padding-left: 15px;
    background: #1d1d1d;
}

.alerts-icon {
    color: #f44336;
}

.alerts-label {
    margin-top: -2px;
    margin-left: 13px;
    font-size: 14.5px;
    color: #ddd;
    white-space: nowrap;
}

.alerts-sound {
    margin-left: 15px;
    color: #999;
}

.chips {
    display: flex;
    gap: 10px;
    width: 971px;
    margin-left: 22px;
    padding-left: 16.5px;
    overflow: hidden;
    border-left: 1px solid #333;
}

.chip {
    display: flex;
    flex: none;
    width: 166px;
    height: 46px;
    overflow: hidden;
    border-radius: 8px;
    background: #1c0a08;
}

.chip-id {
    display: flex;
    flex-direction: column;
    justify-content: center;
    flex: none;
    width: 106px;
    padding-left: 7px;
    border-right: 1px solid #3a2826;
    font-size: 13px;
    line-height: 19px;
    white-space: nowrap;
}

.chip-id b {
    font-size: 14px;
    font-weight: 400;
    color: #eee;
}

.chip-id i {
    font-style: normal;
    color: #888;
}

.chip-id span {
    color: #bbb;
}

.chip-count {
    display: flex;
    align-items: center;
    padding-left: 6px;
    font-size: 13px;
    color: #f44336;
    white-space: nowrap;
}

.chip-blue {
    background: #04202e;
}

.chip-blue .chip-id {
    border-right-color: #1c3a48;
}

.chip-blue .chip-count {
    color: #3ab0e0;
}

.chips-next {
    position: absolute;
    right: 8px;
    top: 15px;
    display: flex;
    align-items: center;
    justify-content: center;
    width: 32px;
    height: 32px;
    border-radius: 50%;
    background: #262626;
    color: #999;
}
```
